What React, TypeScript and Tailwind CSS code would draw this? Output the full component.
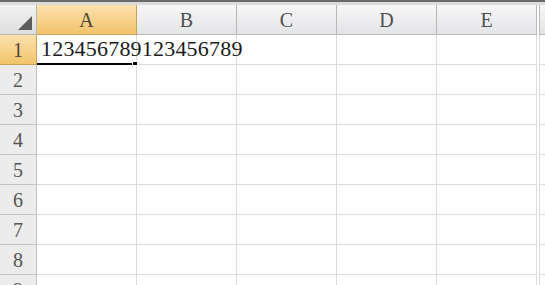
const cols = ["A", "B", "C", "D", "E"];
const rows = [1, 2, 3, 4, 5, 6, 7, 8, 9];

const serif = { fontFamily: '"Liberation Serif", "Times New Roman", serif' };

export default function App() {
  return (
    <div className="w-[545px] h-[285px] overflow-hidden bg-white" style={serif}>
      <div className="h-[2px] bg-[#6b6b6b]" />
      <div className="h-[3px] bg-[#dcdcdc]" />

      {/* column headers */}
      <div className="flex h-[30px]">
        <div className="relative w-[37px] shrink-0 border-r border-b border-[#b8b8b8] bg-gradient-to-b from-[#f2f2f2] to-[#dedede]">
          <svg className="absolute right-[4px] bottom-[4px]" width="14" height="14" viewBox="0 0 14 14">
            <polygon points="14,0 14,14 0,14" fill="#5c5c5c" />
          </svg>
        </div>
        {cols.map((c, i) => (
          <div
            key={c}
            className={
              i === 0
                ? "w-[100px] shrink-0 flex items-center justify-center border-r border-b border-[#c8a15a] bg-gradient-to-b from-[#fbe1ad] to-[#f2c46a] text-[20px] text-[#4d4535]"
                : "w-[100px] shrink-0 flex items-center justify-center border-r border-b border-[#b8b8b8] bg-gradient-to-b from-[#f7f7f8] to-[#e3e4e6] text-[20px] text-[#505050]"
            }
          >
            {c}
          </div>
        ))}
        <div className="flex-1 border-l border-b border-[#b8b8b8] bg-gradient-to-b from-[#f7f7f8] to-[#e3e4e6] ml-[2px]" />
      </div>

      {/* rows */}
      {rows.map((r) => (
        <div key={r} className="flex h-[30px]">
          <div
            className={
              r === 1
                ? "w-[37px] shrink-0 flex items-center justify-center border-r border-b border-[#c8a15a] bg-gradient-to-b from-[#fbe1ad] to-[#f2c46a] text-[20px] text-[#4d4535]"
                : "w-[37px] shrink-0 flex items-center justify-center border-r border-b border-[#c4c4c4] bg-[#ececec] text-[20px] text-[#555555]"
            }
          >
            {r}
          </div>
          {cols.map((c, i) => (
            <div key={c} className="relative w-[100px] shrink-0 border-r border-b border-[#dadcdd]">
              {r === 1 && i === 0 && (
                <>
                  <span className="absolute left-[4px] bottom-[4px] z-10 whitespace-nowrap text-[22px] leading-none text-[#1a1a1a] tracking-[0.2px]">
                    123456789123456789
                  </span>
                  <div className="absolute left-0 right-[4px] bottom-[-1px] h-[2px] bg-black" />
                  <div className="absolute right-[-2px] bottom-[-2px] z-20 w-[6px] h-[5px] bg-black border border-white" />
                </>
              )}
            </div>
          ))}
          <div className="flex-1 border-l border-b border-[#dadcdd] ml-[2px]" />
        </div>
      ))}
    </div>
  );
}
